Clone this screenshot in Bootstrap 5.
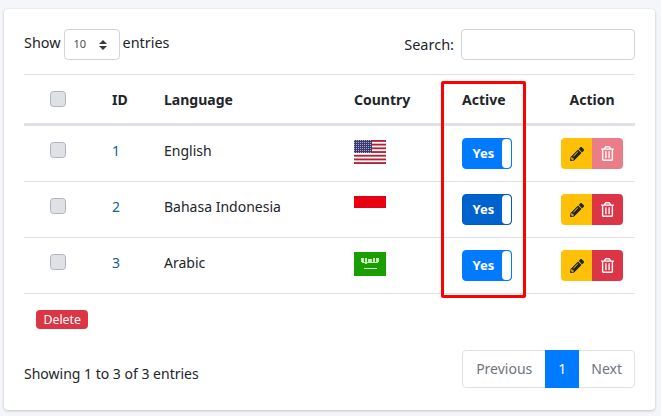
<!DOCTYPE html>
<html lang="en">
<head>
    <meta charset="UTF-8">
    <meta name="viewport" content="width=device-width, initial-scale=1.0">
    <title>Languages</title>
    <link href="https://cdn.jsdelivr.net/npm/bootstrap@5.3.2/dist/css/bootstrap.min.css" rel="stylesheet">
    <script src="https://cdn.jsdelivr.net/npm/bootstrap@5.3.2/dist/js/bootstrap.bundle.min.js"></script>
<style>
html, body { height: 100%; overflow: hidden; }
body { background-color: #f4f6f9; color: #212529; font-family: "Noto Sans", sans-serif; font-size: 14px; padding: 9px 6px 6px 4px; }
.lang-card { height: 401px; border: 0; border-radius: 4px; box-shadow: 0 0 1px rgba(0,0,0,.125), 0 1px 3px rgba(0,0,0,.2); }
.lang-body { padding: 20px; }
.top-row { height: 45px; }
.side-text { line-height: 14px; margin-top: 7px; font-size: 14.4px; }
.search-label { line-height: 31px; font-size: 14.5px; }
.len-select { width: 56px; height: 31px; padding: 0 0 0 9px; font-size: 11px; color: #495057; border: 1px solid #ced4da; border-radius: 4px; margin: 0 3px; appearance: none; background: #fff url("data:image/svg+xml,%3csvg xmlns='http://www.w3.org/2000/svg' viewBox='0 0 4 5'%3e%3cpath fill='%23343a40' d='M2 0L0 2h4zm0 5L0 3h4z'/%3e%3c/svg%3e") no-repeat right 12px center / 8px 10px; }
.search-input { width: 174px; height: 31px; border: 1px solid #ced4da; border-radius: 4px; margin-left: 7px; }
.lang-table { table-layout: fixed; width: 611px; margin: 0; color: #212529; border-collapse: separate; border-spacing: 0; }
.lang-table th, .lang-table td { padding: 0 12px; vertical-align: middle; border-top: 0; border-bottom: 1px solid #dee2e6; }
.lang-table thead th { height: 52px; border-top: 1px solid #dee2e6; border-bottom: 3px solid #dee2e6; font-weight: 700; }
.lang-table tbody td { height: 56px; }
.lang-table tbody td.text-up { padding-bottom: 6px; }
.lang-table tbody td.check-up { padding-bottom: 7px; }
.lang-table tbody td.flag-up { padding-bottom: 3px; }
.lang-check { width: 16px; height: 16px; margin: 0 0 0 14px; background-color: #dee2e6; border-color: #adb5bd; display: block; }
.id-cell { color: #17608f !important; }
.flag-pic { display: block; width: 32px; height: 24px; }
.yes-toggle { width: 50px; height: 31px; padding: 0 7px 0 0; background-color: #007bff; color: #fff; border: 1px solid #007bff; border-radius: 4px; font-size: 13px; font-weight: 700; position: relative; }
.yes-toggle.is-down { background-color: #0062cc; border-color: #005cbf; }
.yes-knob { position: absolute; right: 0; top: 0; bottom: 0; width: 9px; background: #fff; border-radius: 4px; }
.act-btn { width: 31px; height: 31px; padding: 0; display: flex; align-items: center; justify-content: center; border: 0; }
.edit-btn { background-color: #ffc107; border-radius: 4px 0 0 4px; }
.del-btn { background-color: #dc3545; border-radius: 0 4px 4px 0; }
.del-btn.is-faded { background-color: #ea7d88; }
.del-badge { display: inline-block; margin: 16px 0 0 12px; padding: 0 7.5px; height: 19px; line-height: 19px; font-size: 12.3px; background-color: #dc3545; color: #fff; border-radius: 4px; }
.foot-row { margin-top: 21px; height: 38px; }
.foot-text { padding-top: 9px; }
.page-box { display: flex; border: 1px solid #dee2e6; border-radius: 4px; height: 38px; }
.page-box a { padding: 0 12px; line-height: 36px; color: #6c757d; text-decoration: none; }
.page-box a.prev-link { padding: 0 13px; }
.page-box a.now { background-color: #007bff; color: #fff; margin: -1px 0; line-height: 38px; width: 34px; padding: 0; text-align: center; }
.mark-box { position: absolute; left: 437px; top: 72px; width: 85px; height: 217px; border: 3px solid #f00; border-radius: 2px; pointer-events: none; }
</style>
</head>
<body>
<svg width="0" height="0" class="d-block position-absolute">
    <defs>
        <symbol id="ico-pencil" viewBox="0 0 512 512"><path fill="#212529" d="M497.9 142.1l-46.1 46.1c-4.7 4.7-12.3 4.7-17 0l-111-111c-4.7-4.7-4.7-12.3 0-17l46.1-46.1c18.7-18.7 49.1-18.7 67.9 0l60.1 60.1c18.8 18.7 18.8 49.1 0 67.9zM284.2 99.8L21.6 362.4.4 483.9c-2.9 16.4 11.4 30.6 27.8 27.8l121.5-21.3 262.6-262.6c4.7-4.7 4.7-12.3 0-17l-111-111c-4.8-4.7-12.4-4.7-17.1 0zM124.1 339.9c-5.5-5.5-5.5-14.3 0-19.8l154-154c5.5-5.5 14.3-5.5 19.8 0s5.5 14.3 0 19.8l-154 154c-5.5 5.5-14.3 5.5-19.8 0zM88 424h48v36.3l-64.5 11.3-31.1-31.1L51.7 376H88v48z"/></symbol>
        <symbol id="ico-trash" viewBox="0 0 448 512"><path fill="#fff" d="M268 416h24a12 12 0 0 0 12-12V188a12 12 0 0 0-12-12h-24a12 12 0 0 0-12 12v216a12 12 0 0 0 12 12zM432 80h-82.41l-34-56.7A48 48 0 0 0 274.41 0H173.59a48 48 0 0 0-41.16 23.3L98.41 80H16A16 16 0 0 0 0 96v16a16 16 0 0 0 16 16h16v336a48 48 0 0 0 48 48h288a48 48 0 0 0 48-48V128h16a16 16 0 0 0 16-16V96a16 16 0 0 0-16-16zM171.84 50.91A6 6 0 0 1 177 48h94a6 6 0 0 1 5.15 2.91L293.61 80H154.39zM368 464H80V128h288zm-212-48h24a12 12 0 0 0 12-12V188a12 12 0 0 0-12-12h-24a12 12 0 0 0-12 12v216a12 12 0 0 0 12 12z"/></symbol>
        <pattern id="us-stars" width="2" height="2" patternUnits="userSpaceOnUse"><rect width="1" height="1" fill="#a9a9c9"/></pattern>
    </defs>
</svg>
<div class="card lang-card position-relative">
    <div class="lang-body">
        <div class="d-flex justify-content-between top-row">
            <div class="d-flex align-items-start"><span class="side-text">Show</span><select class="len-select"><option>10</option></select><span class="side-text">entries</span></div>
            <div class="d-flex align-items-start"><span class="search-label">Search:</span><input class="search-input" type="text"></div>
        </div>
        <table class="table lang-table">
            <colgroup><col style="width:76px"><col style="width:52px"><col style="width:190px"><col style="width:108px"><col style="width:99px"><col style="width:86px"></colgroup>
            <thead>
                <tr>
                    <th><input class="form-check-input lang-check" type="checkbox"></th>
                    <th>ID</th>
                    <th>Language</th>
                    <th>Country</th>
                    <th>Active</th>
                    <th class="text-center">Action</th>
                </tr>
            </thead>
            <tbody>
                <tr>
                    <td class="check-up"><input class="form-check-input lang-check" type="checkbox"></td>
                    <td class="id-cell text-up">1</td>
                    <td class="text-up">English</td>
                    <td class="flag-up">
                        <svg class="flag-pic" viewBox="0 0 32 24">
                            <rect width="32" height="24" fill="#fff"/>
                            <g fill="#b22234"><rect width="32" height="1.85"/><rect y="3.7" width="32" height="1.85"/><rect y="7.4" width="32" height="1.85"/><rect y="11.1" width="32" height="1.85"/><rect y="14.8" width="32" height="1.85"/><rect y="18.5" width="32" height="1.85"/><rect y="22.15" width="32" height="1.85"/></g>
                            <rect width="18" height="13" fill="#3c3b6e"/>
                            <rect width="18" height="13" fill="url(#us-stars)"/>
                        </svg>
                    </td>
                    <td><button class="yes-toggle" type="button">Yes<span class="yes-knob"></span></button></td>
                    <td>
                        <div class="d-flex justify-content-center">
                            <button class="act-btn edit-btn" type="button"><svg width="14" height="14"><use href="#ico-pencil"/></svg></button>
                            <button class="act-btn del-btn is-faded" type="button"><svg width="13" height="15"><use href="#ico-trash"/></svg></button>
                        </div>
                    </td>
                </tr>
                <tr>
                    <td class="check-up"><input class="form-check-input lang-check" type="checkbox"></td>
                    <td class="id-cell text-up">2</td>
                    <td class="text-up">Bahasa Indonesia</td>
                    <td class="flag-up">
                        <svg class="flag-pic" viewBox="0 0 32 24"><rect width="32" height="12" fill="#e70011"/><rect y="12" width="32" height="12" fill="#fff"/></svg>
                    </td>
                    <td><button class="yes-toggle is-down" type="button">Yes<span class="yes-knob"></span></button></td>
                    <td>
                        <div class="d-flex justify-content-center">
                            <button class="act-btn edit-btn" type="button"><svg width="14" height="14"><use href="#ico-pencil"/></svg></button>
                            <button class="act-btn del-btn" type="button"><svg width="13" height="15"><use href="#ico-trash"/></svg></button>
                        </div>
                    </td>
                </tr>
                <tr>
                    <td class="check-up"><input class="form-check-input lang-check" type="checkbox"></td>
                    <td class="id-cell text-up">3</td>
                    <td class="text-up">Arabic</td>
                    <td class="flag-up">
                        <svg class="flag-pic" viewBox="0 0 32 24">
                            <rect width="32" height="24" fill="#1a9f00"/>
                            <g fill="#c6e8bd"><rect x="7" y="6" width="3" height="4"/><rect x="11" y="6" width="2" height="6"/><rect x="14" y="7" width="4" height="3"/><rect x="19" y="6" width="2" height="5"/><rect x="22" y="6" width="3" height="4"/><rect x="8" y="10" width="16" height="1"/></g>
                            <rect x="10" y="16" width="13" height="1" fill="#e2f4dd"/>
                        </svg>
                    </td>
                    <td><button class="yes-toggle" type="button">Yes<span class="yes-knob"></span></button></td>
                    <td>
                        <div class="d-flex justify-content-center">
                            <button class="act-btn edit-btn" type="button"><svg width="14" height="14"><use href="#ico-pencil"/></svg></button>
                            <button class="act-btn del-btn" type="button"><svg width="13" height="15"><use href="#ico-trash"/></svg></button>
                        </div>
                    </td>
                </tr>
            </tbody>
        </table>
        <span class="del-badge">Delete</span>
        <div class="d-flex justify-content-between align-items-center foot-row">
            <div class="foot-text">Showing 1 to 3 of 3 entries</div>
            <div class="page-box"><a href="#" class="prev-link">Previous</a><a href="#" class="now">1</a><a href="#">Next</a></div>
        </div>
    </div>
    <div class="mark-box"></div>
</div>
</body>
</html>
